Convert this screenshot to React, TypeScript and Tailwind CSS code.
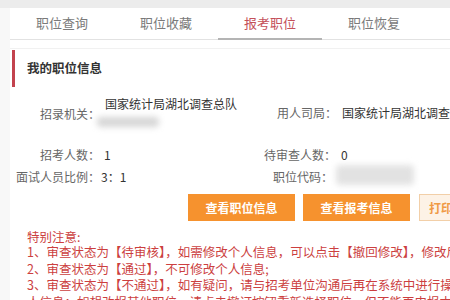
import React from "react";

const tabs = ["职位查询", "职位收藏", "报考职位", "职位恢复"];

export default function App() {
  return (
    <div
      className="w-[450px] h-[300px] overflow-hidden bg-[#f8f8f8] flex flex-col"
      style={{ fontFamily: '"Noto Sans CJK SC", "Noto Sans", sans-serif' }}
    >
      <div className="h-[8px] bg-[#ececec] shrink-0" />
      <div className="ml-[10px] bg-white flex-1 flex flex-col min-w-0">
        {/* tabs */}
        <div className="flex h-[32px] border-b border-[#e2e2e2] shrink-0">
          {tabs.map((t, i) => (
            <div
              key={t}
              className={
                i === 2
                  ? "w-[104px] shrink-0 text-center text-[13px] leading-[30px] text-[#c4505a] border-b-2 border-[#b4b4b4] mb-[-1px]"
                  : "w-[104px] shrink-0 text-center text-[13px] leading-[30px] text-[#7a7a7a]"
              }
            >
              {t}
            </div>
          ))}
        </div>
        {/* card */}
        <div className="mt-[8px] border-t border-[#f1f1f1] flex flex-col min-w-0">
          <div className="flex items-center mt-[1px] h-[37px]">
            <div className="ml-[2px] w-[3px] h-[37px] bg-[#c3434e]" />
            <div className="ml-[12px] text-[12.5px] font-bold text-[#333]">我的职位信息</div>
          </div>

          {/* row 1 */}
          <div className="flex items-center mt-[9px] h-[36px] text-[12px]">
            <div className="w-[90px] shrink-0 text-right text-[#666]">招录机关：</div>
            <div className="w-[140px] shrink-0 ml-[5px] text-[#333] leading-[18px] whitespace-nowrap">
              <div className="mt-[-2px]">国家统计局湖北调查总队</div>
              <div className="relative h-[18px]">
                <div className="absolute left-[-8px] top-[4px] w-[62px] h-[10px] bg-[#d6d6d6] blur-[3px] rounded" />
              </div>
            </div>
            <div className="w-[92px] shrink-0 text-right text-[#666] mt-[-2px]">用人司局：</div>
            <div className="ml-[5px] text-[#333] whitespace-nowrap mt-[-2px]">国家统计局湖北调查总队</div>
          </div>

          {/* row 2 */}
          <div className="flex items-center mt-[13px] h-[20px] text-[12px]">
            <div className="w-[90px] shrink-0 text-right text-[#666]">招考人数：</div>
            <div className="w-[140px] shrink-0 ml-[4px] text-[#333]">1</div>
            <div className="w-[92px] shrink-0 text-right text-[#666]">待审查人数：</div>
            <div className="ml-[5px] text-[#333]">0</div>
          </div>

          {/* row 3 */}
          <div className="flex items-center mt-[2px] h-[20px] text-[12px]">
            <div className="w-[90px] shrink-0 text-right text-[#666]">面试人员比例：</div>
            <div className="w-[140px] shrink-0 ml-[1px] text-[#333]">3：1</div>
            <div className="w-[92px] shrink-0 text-right text-[#666]">职位代码：</div>
            <div className="ml-[3px] relative w-[80px] h-[20px]">
              <div className="absolute left-0 top-[-2px] w-[78px] h-[20px] bg-[#e2e2e2] blur-[3px] rounded" />
            </div>
          </div>

          {/* buttons */}
          <div className="flex mt-[7px] h-[27px] text-[12px] font-bold whitespace-nowrap">
            <div className="ml-[178px] w-[107px] shrink-0 bg-[#f6922e] text-white flex items-center justify-center">
              查看职位信息
            </div>
            <div className="ml-[8px] w-[107px] shrink-0 bg-[#f6922e] text-white flex items-center justify-center">
              查看报考信息
            </div>
            <div className="ml-[9px] w-[80px] shrink-0 bg-[#fdf2e6] border border-[#f2cfa8] text-[#f09a45] flex items-center pl-[9px]">
              打印
            </div>
          </div>

          {/* notes */}
          <div className="mt-[8px] pl-[17px] text-[12.5px] text-[#cc3f3f] whitespace-nowrap">
            <div className="leading-[15px]">特别注意:</div>
            <div className="leading-[16.5px]">1、审查状态为【待审核】，如需修改个人信息，可以点击【撤回修改】，修改后再提交</div>
            <div className="leading-[16.5px]">2、审查状态为【通过】，不可修改个人信息;</div>
            <div className="leading-[16.5px]">3、审查状态为【不通过】，如有疑问，请与招考单位沟通后再在系统中进行操作修改个</div>
            <div className="leading-[16.5px]">人信息；如想改报其他职位，请点击撤订按钮重新选择职位，但不能再申报本职位</div>
          </div>
        </div>
      </div>
    </div>
  );
}
